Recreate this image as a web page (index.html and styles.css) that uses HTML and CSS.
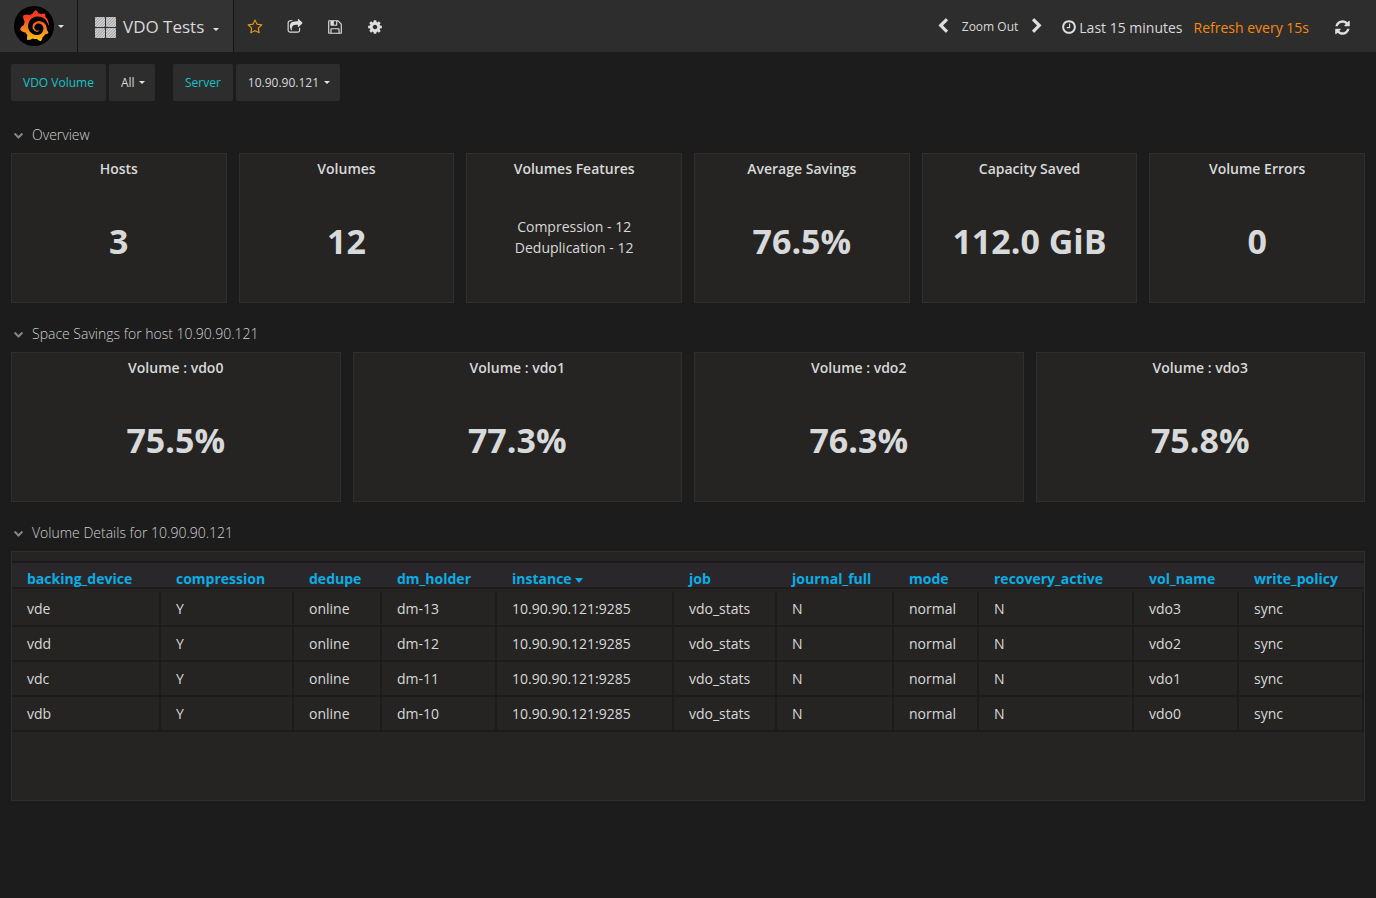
FILE: index.html
```html
<!DOCTYPE html>
<html lang="en">
<head>
<meta charset="utf-8">
<meta name="viewport" content="width=device-width, initial-scale=1">
<title>VDO Tests</title>
<link rel="stylesheet" href="styles.css">
</head>
<body>
<svg class="defs" width="0" height="0" aria-hidden="true">
  <symbol id="down" viewBox="0 0 1792 1792"><path d="M1683 808l-742 741q-19 19-45 19t-45-19l-742-741q-19-19-19-45.5t19-45.5l166-165q19-19 45-19t45 19l531 531 531-531q19-19 45-19t45 19l166 165q19 19 19 45.5t-19 45.5z"/></symbol>
</svg>

<header class="navbar">
  <button class="nav-brand" type="button" aria-label="Main menu">
    <svg class="logo" viewBox="0 0 40 40" aria-hidden="true">
      <defs><linearGradient id="flame" x1="0" y1="1" x2="0" y2="0"><stop offset="0" stop-color="#fcc90f"/><stop offset="0.35" stop-color="#fb8a1c"/><stop offset="0.75" stop-color="#f8431f"/><stop offset="1" stop-color="#f5301f"/></linearGradient></defs>
      <circle cx="20" cy="20" r="20" fill="#000"/>
      <g transform="translate(4.8 4) scale(1.3)"><path fill="url(#flame)" d="M23.02 10.59a8.578 8.578 0 0 0-.862-3.034 8.911 8.911 0 0 0-1.789-2.445c.337-1.342-.413-2.505-.413-2.505-1.292-.08-2.113.4-2.416.62-.052-.02-.102-.044-.154-.064-.22-.089-.446-.172-.677-.247-.231-.073-.47-.14-.711-.197a9.867 9.867 0 0 0-.875-.161C14.557.753 12.94 0 12.94 0c-1.804 1.145-2.147 2.744-2.147 2.744l-.018.093c-.098.029-.2.057-.298.088-.138.042-.275.094-.413.143-.138.055-.275.107-.41.166a8.869 8.869 0 0 0-1.557.87l-.063-.029c-2.497-.955-4.716.195-4.716.195-.203 2.658.996 4.33 1.235 4.636a11.608 11.608 0 0 0-.607 2.635C1.636 12.677.953 15.014.953 15.014c1.926 2.214 4.171 2.351 4.171 2.351.003-.002.006-.002.006-.005.285.509.615.994.986 1.446.156.19.32.371.488.548-.704 2.009.099 3.68.099 3.68 2.144.08 3.553-.937 3.849-1.173a9.784 9.784 0 0 0 3.164.501h.08l.055-.003.107-.002.103-.005.003.002c1.01 1.44 2.788 1.646 2.788 1.646 1.264-1.332 1.337-2.653 1.337-2.94v-.058c0-.02-.003-.039-.003-.06.265-.187.52-.387.758-.6a7.875 7.875 0 0 0 1.415-1.7c1.43.083 2.437-.885 2.437-.885-.236-1.49-1.085-2.216-1.264-2.354l-.018-.013-.016-.013a.217.217 0 0 1-.031-.02c.008-.092.016-.18.02-.27.011-.162.016-.323.016-.48v-.253l-.005-.098-.008-.135a1.891 1.891 0 0 0-.01-.13c-.003-.042-.008-.083-.013-.125l-.016-.124-.018-.122a6.215 6.215 0 0 0-2.032-3.73 6.015 6.015 0 0 0-3.222-1.46 6.292 6.292 0 0 0-.85-.048l-.107.002h-.063l-.044.003-.104.008a4.777 4.777 0 0 0-3.335 1.695c-.332.4-.592.84-.768 1.297a4.594 4.594 0 0 0-.312 1.817l.003.091c.005.055.007.11.013.164a3.615 3.615 0 0 0 .698 1.82 3.53 3.53 0 0 0 1.827 1.282c.33.098.66.14.971.137.039 0 .078 0 .114-.002l.063-.003c.02 0 .041-.003.062-.003.034-.002.065-.007.099-.01.007 0 .018-.003.028-.003l.031-.005.06-.008a1.18 1.18 0 0 0 .112-.02c.036-.008.072-.013.109-.024a2.634 2.634 0 0 0 .914-.415c.028-.02.056-.041.085-.065a.248.248 0 0 0 .039-.35.244.244 0 0 0-.309-.06l-.078.042c-.09.044-.184.083-.283.116a2.476 2.476 0 0 1-.475.096c-.028.003-.054.006-.083.006l-.083.002c-.026 0-.054 0-.08-.002l-.102-.006h-.012l-.024.006c-.016-.003-.031-.003-.044-.006-.031-.002-.06-.007-.091-.01a2.59 2.59 0 0 1-.724-.213 2.557 2.557 0 0 1-.667-.438 2.52 2.52 0 0 1-.805-1.475 2.306 2.306 0 0 1-.029-.444l.006-.122v-.023l.002-.031c.003-.021.003-.04.005-.06a3.163 3.163 0 0 1 1.352-2.29 3.12 3.12 0 0 1 .937-.43 2.946 2.946 0 0 1 .776-.101h.06l.07.002.045.003h.026l.07.005a4.041 4.041 0 0 1 1.635.49 3.94 3.94 0 0 1 1.602 1.662 3.77 3.77 0 0 1 .397 1.414l.005.076.003.075c.002.026.002.05.002.075 0 .024.003.052 0 .07v.065l-.002.073-.008.174a6.195 6.195 0 0 1-.08.639 5.1 5.1 0 0 1-.267.927 5.31 5.31 0 0 1-.624 1.13 5.052 5.052 0 0 1-3.237 2.014 4.82 4.82 0 0 1-.649.066l-.039.003h-.287a6.607 6.607 0 0 1-1.716-.265 6.776 6.776 0 0 1-3.4-2.274 6.75 6.75 0 0 1-.746-1.15 6.616 6.616 0 0 1-.714-2.596l-.005-.083-.002-.02v-.056l-.003-.073v-.096l-.003-.104v-.07l.003-.163c.008-.22.026-.45.054-.678a8.707 8.707 0 0 1 .28-1.355c.128-.444.286-.872.473-1.277a7.04 7.04 0 0 1 1.456-2.1 5.925 5.925 0 0 1 .953-.763c.169-.111.343-.213.524-.306.089-.05.182-.091.273-.135.047-.02.093-.042.138-.062a7.177 7.177 0 0 1 .714-.267l.145-.045c.049-.015.098-.026.148-.041.098-.029.197-.052.296-.076.049-.013.1-.02.15-.033l.15-.032.151-.028.076-.013.075-.01.153-.024c.057-.01.114-.013.171-.023l.169-.021c.036-.003.073-.008.106-.01l.073-.008.036-.003.042-.002c.057-.003.114-.008.171-.01l.086-.006h.023l.037-.003.145-.007a7.999 7.999 0 0 1 1.708.125 7.917 7.917 0 0 1 2.048.68 8.253 8.253 0 0 1 1.672 1.09l.09.077.089.078c.06.052.114.107.171.159.057.052.112.106.166.16.052.055.107.107.159.164a8.671 8.671 0 0 1 1.41 1.978c.012.026.028.052.04.078l.04.078.075.156c.023.051.05.1.07.153l.065.15a8.848 8.848 0 0 1 .45 1.34.19.19 0 0 0 .201.142.186.186 0 0 0 .172-.184c.01-.246.002-.532-.024-.856z"/></g>
    </svg>
    <span class="caret"></span>
  </button>
  <button class="nav-title" type="button">
    <svg class="icon-grid" viewBox="0 0 21 21" aria-hidden="true">
      <defs><pattern id="hatch" width="2" height="2" patternUnits="userSpaceOnUse" patternTransform="rotate(45)"><rect width="2" height="2" fill="#8f9092"/><rect width="1.2" height="2" fill="#dcdcdc"/></pattern></defs>
      <g fill="url(#hatch)"><rect width="10" height="10" rx="1"/><rect x="11" width="10" height="10" rx="1"/><rect y="11" width="10" height="10" rx="1"/><rect x="11" y="11" width="10" height="10" rx="1"/></g>
    </svg>
    <span class="nav-name">VDO Tests</span>
    <span class="caret"></span>
  </button>
  <div class="nav-actions">
    <button class="action" type="button" aria-label="Mark as favorite"><svg class="icon icon-star" viewBox="0 0 1792 1792"><path d="M1201 1004l306-297-422-62-189-382-189 382-422 62 306 297-73 421 378-199 377 199zm527-357q0 22-26 48l-363 354 86 500q1 7 1 20 0 50-41 50-19 0-40-12l-449-236-449 236q-22 12-40 12-21 0-31.500-14.500t-10.500-35.500q0-6 2-20l86-500-364-354q-25-27-25-48 0-37 56-46l502-73 225-455q19-41 49-41t49 41l225 455 502 73q56 9 56 46z"/></svg></button>
    <button class="action" type="button" aria-label="Share dashboard"><svg class="icon" viewBox="0 0 1792 1792"><path d="M1472 989v259q0 119-84.500 203.500t-203.500 84.500h-832q-119 0-203.500-84.500t-84.500-203.500v-832q0-119 84.500-203.500t203.500-84.500h255q13 0 22.500 9.500t9.500 22.500q0 27-26 32-77 26-133 60-10 4-16 4h-112q-66 0-113 47t-47 113v832q0 66 47 113t113 47h832q66 0 113-47t47-113v-214q0-19 18-29 28-13 54-37 16-16 35-8 21 9 21 29zm237-496l-384 384q-18 19-45 19-12 0-25-5-39-17-39-59v-192h-160q-323 0-438 131-119 137-74 473 3 23-20 34-8 2-12 2-16 0-26-13-10-14-21-31t-39.500-68.500-49.500-99.500-38.500-114-17.500-122q0-49 3.500-91t14-90 28-88 47-81.500 68.500-74 94.500-61.500 124.500-48.500 159.500-30.500 196.500-11h160v-192q0-42 39-59 13-5 25-5 26 0 45 19l384 384q19 19 19 45t-19 45z"/></svg></button>
    <button class="action" type="button" aria-label="Save dashboard"><svg class="icon" viewBox="0 0 1792 1792"><path d="M512 1536h768v-384h-768v384zm896 0h128v-896q0-14-10-38.500t-20-34.500l-281-281q-10-10-34-20t-39-10v416q0 40-28 68t-68 28h-576q-40 0-68-28t-28-68v-416h-128v1280h128v-416q0-40 28-68t68-28h832q40 0 68 28t28 68v416zm-384-928v-320q0-13-9.500-22.500t-22.500-9.500h-192q-13 0-22.500 9.500t-9.500 22.500v320q0 13 9.500 22.500t22.500 9.500h192q13 0 22.500-9.500t9.500-22.500zm640 32v928q0 40-28 68t-68 28h-1344q-40 0-68-28t-28-68v-1344q0-40 28-68t68-28h928q40 0 88 20t76 48l280 280q28 28 48 76t20 88z"/></svg></button>
    <button class="action" type="button" aria-label="Settings"><svg class="icon" viewBox="0 0 1792 1792"><path d="M1152 896q0-106-75-181t-181-75-181 75-75 181 75 181 181 75 181-75 75-181zm512-109v222q0 12-8 23t-20 13l-185 28q-19 54-39 91 35 50 107 138 10 12 10 25t-9 23q-27 37-99 108t-94 71q-12 0-26-9l-138-108q-44 23-91 38-16 136-29 186-7 28-36 28h-222q-14 0-24.500-8.500t-11.500-21.500l-28-184q-49-16-90-37l-141 107q-10 9-25 9-14 0-25-11-126-114-165-168-7-10-7-23 0-12 8-23 15-21 51-66.500t54-70.500q-27-50-41-99l-183-27q-13-2-21-12.500t-8-23.500v-222q0-12 8-23t19-13l186-28q14-46 39-92-40-57-107-138-10-12-10-24 0-10 9-23 26-36 98.500-107.500t94.500-71.500q13 0 26 10l138 107q44-23 91-38 16-136 29-186 7-28 36-28h222q14 0 24.500 8.500t11.500 21.500l28 184q49 16 90 37l142-107q9-9 24-9 13 0 25 10 129 119 165 170 7 8 7 22 0 12-8 23-15 21-51 66.500t-54 70.500q26 50 41 98l183 28q13 2 21 12.500t8 23.500z"/></svg></button>
  </div>
  <div class="time-controls">
    <button class="zoom-step" type="button" aria-label="Shift time backward"><svg class="icon" viewBox="0 0 1792 1792"><path d="M1427 301l-531 531 531 531q19 19 19 45t-19 45l-166 166q-19 19-45 19t-45-19l-742-742q-19-19-19-45t19-45l742-742q19-19 45-19t45 19l166 166q19 19 19 45t-19 45z"/></svg></button>
    <button class="zoom-out" type="button">Zoom Out</button>
    <button class="zoom-step" type="button" aria-label="Shift time forward"><svg class="icon" viewBox="0 0 1792 1792"><path d="M1363 877l-742 742q-19 19-45 19t-45-19l-166-166q-19-19-19-45t19-45l531-531-531-531q-19-19-19-45t19-45l166-166q19-19 45-19t45 19l742 742q19 19 19 45t-19 45z"/></svg></button>
    <button class="time-range" type="button">
      <svg class="icon" viewBox="0 0 1792 1792" aria-hidden="true"><path d="M1024 544v448q0 14-9 23t-23 9h-320q-14 0-23-9t-9-23v-64q0-14 9-23t23-9h224v-352q0-14 9-23t23-9h64q14 0 23 9t9 23zm416 352q0-148-73-273t-198-198-273-73-273 73-198 198-73 273 73 273 198 198 273 73 273-73 198-198 73-273zm224 0q0 209-103 385.500t-279.500 279.500-385.500 103-385.500-103-279.500-279.500-103-385.500 103-385.500 279.500-279.500 385.500-103 385.500 103 279.500 279.500 103 385.500z"/></svg>
      <span>Last 15 minutes</span>
      <span class="refresh-rate">Refresh every 15s</span>
    </button>
    <button class="refresh" type="button" aria-label="Refresh"><svg class="icon icon-refresh" viewBox="0 0 1792 1792"><path d="M1639 1056q0 5-1 7-64 268-268 434.500t-478 166.500q-146 0-282.500-55t-243.500-157l-129 129q-19 19-45 19t-45-19-19-45v-448q0-26 19-45t45-19h448q26 0 45 19t19 45-19 45l-137 137q71 66 161 102t187 36q134 0 250-65t186-179q11-17 53-117 8-23 30-23h192q13 0 22.500 9.500t9.500 22.500zm25-800v448q0 26-19 45t-45 19h-448q-26 0-45-19t-19-45 19-45l138-138q-148-137-349-137-134 0-250 65t-186 179q-11 17-53 117-8 23-30 23h-199q-13 0-22.500-9.500t-9.500-22.500v-7q65-268 270-434.500t480-166.500q146 0 284 55.500t245 156.500l130-129q19-19 45-19t45 19 19 45z"/></svg></button>
  </div>
</header>

<main class="dashboard">
  <div class="submenu">
    <div class="variable">
      <label class="variable-label" for="var-volume">VDO Volume</label>
      <select class="variable-value" id="var-volume"><option>All</option></select>
    </div>
    <div class="variable">
      <label class="variable-label" for="var-server">Server</label>
      <select class="variable-value" id="var-server"><option>10.90.90.121</option></select>
    </div>
  </div>

  <section>
    <h2 class="row-title"><button class="row-toggle" type="button"><svg class="row-icon" aria-hidden="true"><use href="#down"/></svg>Overview</button></h2>
    <div class="panels panels-six">
      <article class="panel"><h3 class="panel-title">Hosts</h3><p class="stat">3</p></article>
      <article class="panel"><h3 class="panel-title">Volumes</h3><p class="stat">12</p></article>
      <article class="panel"><h3 class="panel-title">Volumes Features</h3><p class="features">Compression - 12<br>Deduplication - 12</p></article>
      <article class="panel"><h3 class="panel-title">Average Savings</h3><p class="stat">76.5%</p></article>
      <article class="panel"><h3 class="panel-title">Capacity Saved</h3><p class="stat">112.0 GiB</p></article>
      <article class="panel"><h3 class="panel-title">Volume Errors</h3><p class="stat">0</p></article>
    </div>
  </section>

  <section>
    <h2 class="row-title"><button class="row-toggle" type="button"><svg class="row-icon" aria-hidden="true"><use href="#down"/></svg>Space Savings for host 10.90.90.121</button></h2>
    <div class="panels panels-four">
      <article class="panel"><h3 class="panel-title">Volume : vdo0</h3><p class="stat">75.5%</p></article>
      <article class="panel"><h3 class="panel-title">Volume : vdo1</h3><p class="stat">77.3%</p></article>
      <article class="panel"><h3 class="panel-title">Volume : vdo2</h3><p class="stat">76.3%</p></article>
      <article class="panel"><h3 class="panel-title">Volume : vdo3</h3><p class="stat">75.8%</p></article>
    </div>
  </section>

  <section>
    <h2 class="row-title"><button class="row-toggle" type="button"><svg class="row-icon" aria-hidden="true"><use href="#down"/></svg>Volume Details for 10.90.90.121</button></h2>
    <div class="table-panel">
      <table class="details">
        <colgroup><col class="c-device"><col class="c-compression"><col class="c-dedupe"><col class="c-holder"><col class="c-instance"><col class="c-job"><col class="c-journal"><col class="c-mode"><col class="c-recovery"><col class="c-name"><col class="c-policy"></colgroup>
        <thead>
          <tr><th>backing_device</th><th>compression</th><th>dedupe</th><th>dm_holder</th><th aria-sort="descending">instance<span class="sort-caret"></span></th><th>job</th><th>journal_full</th><th>mode</th><th>recovery_active</th><th>vol_name</th><th>write_policy</th></tr>
        </thead>
        <tbody>
          <tr class="spacer" aria-hidden="true"><td colspan="11"></td></tr>
          <tr><td>vde</td><td>Y</td><td>online</td><td>dm-13</td><td>10.90.90.121:9285</td><td>vdo_stats</td><td>N</td><td>normal</td><td>N</td><td>vdo3</td><td>sync</td></tr>
          <tr><td>vdd</td><td>Y</td><td>online</td><td>dm-12</td><td>10.90.90.121:9285</td><td>vdo_stats</td><td>N</td><td>normal</td><td>N</td><td>vdo2</td><td>sync</td></tr>
          <tr><td>vdc</td><td>Y</td><td>online</td><td>dm-11</td><td>10.90.90.121:9285</td><td>vdo_stats</td><td>N</td><td>normal</td><td>N</td><td>vdo1</td><td>sync</td></tr>
          <tr><td>vdb</td><td>Y</td><td>online</td><td>dm-10</td><td>10.90.90.121:9285</td><td>vdo_stats</td><td>N</td><td>normal</td><td>N</td><td>vdo0</td><td>sync</td></tr>
        </tbody>
      </table>
    </div>
  </section>
</main>
</body>
</html>
```
FILE: styles.css
```css
* { box-sizing: border-box; }

body {
  margin: 0;
  background: #1c1c1c;
  color: #d8d9da;
  font-family: "Open Sans", "Noto Sans", sans-serif;
  font-size: 14px;
  line-height: 21px;
}

h2, h3, p { margin: 0; }

button {
  margin: 0;
  padding: 0;
  border: 0;
  background: none;
  color: inherit;
  font: inherit;
  cursor: pointer;
}

.defs { position: absolute; }

.navbar {
  display: flex;
  height: 52px;
  background: #2d2d2d;
}

.nav-brand,
.nav-title {
  display: flex;
  align-items: center;
  background: #333333;
  border-right: 1px solid #141414;
}

.nav-brand { padding: 0 13px 0 14px; gap: 4px; }
.nav-title { padding: 2px 14px 0 17px; }

.logo { width: 40px; height: 40px; }
.icon-grid { width: 21px; height: 21px; margin-right: 7px; }

.nav-name {
  font-size: 17px;
  line-height: 24px;
}

.caret {
  border: 3px solid transparent;
  border-top-color: #e3e3e3;
  border-bottom: 0;
}

.nav-title .caret { margin: 5px 0 0 9px; }

.nav-actions {
  display: flex;
  align-items: center;
  padding: 2px 0 0 12px;
  gap: 22px;
}

.action { display: flex; width: 18px; justify-content: center; }

.icon {
  width: 16px;
  height: 16px;
  fill: #dedede;
}

.icon-star { fill: #eb9b13; }
.icon-refresh { width: 17px; height: 17px; }

.time-controls {
  display: flex;
  align-items: center;
  margin-left: auto;
  padding-right: 25px;
}

.zoom-step { display: flex; }
.zoom-out {
  padding: 0 11px;
  font-size: 12px;
}

.time-range {
  display: flex;
  align-items: center;
  margin: 2px 25px 0 16px;
  gap: 2px;
}

.refresh-rate { margin-left: 9px; color: #f68a0b; }
.refresh { display: flex; margin-top: 2px; }

.dashboard { padding: 12px 11px; }

.submenu {
  display: flex;
  gap: 18px;
  margin-bottom: 3px;
}

.variable { display: flex; gap: 3px; }

.variable-label,
.variable-value {
  height: 37px;
  font-size: 12px;
  line-height: 37px;
  background-color: #2d2d2d;
  border-radius: 2px;
}

.variable-label { padding: 0 12px; color: #14c3ca; }

.variable-value {
  margin: 0;
  padding: 0 20px 0 12px;
  border: 0;
  appearance: none;
  color: #d8d9da;
  font-family: inherit;
  background-image: url("data:image/svg+xml,%3Csvg xmlns='http://www.w3.org/2000/svg' width='6' height='3'%3E%3Cpath d='M0 0h6L3 3z' fill='%23e3e3e3'/%3E%3C/svg%3E");
  background-repeat: no-repeat;
  background-position: right 10px center;
}

.row-title {
  padding: 18px 0 6px 2px;
  font-size: 14px;
  font-weight: 300;
  line-height: 25px;
}

.row-toggle {
  display: flex;
  align-items: center;
  gap: 8px;
  color: #d0d0d0;
}

.row-icon { width: 11px; height: 10px; fill: #858585; }

.panels { display: grid; gap: 12px; }
.panels-six { grid-template-columns: repeat(6, 1fr); }
.panels-four { grid-template-columns: repeat(4, 1fr); }

.panel,
.table-panel {
  background: #252422;
  border: 1px solid #2f2f2f;
}

.panel {
  display: flex;
  flex-direction: column;
  min-height: 150px;
  text-align: center;
}

.panel-title {
  font-size: 14px;
  font-weight: 600;
  line-height: 28px;
  padding-top: 1px;
}

.stat,
.features {
  display: flex;
  flex: 1;
  align-items: center;
  justify-content: center;
}

.stat { padding-bottom: 2px; font-size: 34px; font-weight: 700; }
.features { padding-bottom: 11px; }

.table-panel { min-height: 250px; padding-top: 9px; }

.details {
  width: 100%;
  table-layout: fixed;
  border-spacing: 0;
}

.c-device { width: 149px; }
.c-compression { width: 133px; }
.c-dedupe { width: 88px; }
.c-holder { width: 115px; }
.c-instance { width: 177px; }
.c-job { width: 103px; }
.c-journal { width: 117px; }
.c-mode { width: 85px; }
.c-recovery { width: 155px; }
.c-name { width: 105px; }
.c-policy { width: 125px; }

.details th {
  padding: 7px 0 0 15px;
  background: #292729;
  border-top: 2px solid #1c1c1c;
  border-bottom: 2px solid #1c1c1c;
  color: #0aade6;
  font-weight: 700;
  line-height: 17px;
  text-align: left;
  white-space: nowrap;
}

.details td {
  padding: 6px 0 6px 15px;
  border-right: 2px solid #1c1c1c;
  border-bottom: 2px solid #1c1c1c;
}

.details .spacer td {
  height: 3px;
  padding: 0;
  border: 0;
}

.sort-caret {
  display: inline-block;
  margin-left: 3px;
  vertical-align: middle;
  border: 4px solid transparent;
  border-top: 5px solid #0aade6;
  border-bottom: 0;
}
```
